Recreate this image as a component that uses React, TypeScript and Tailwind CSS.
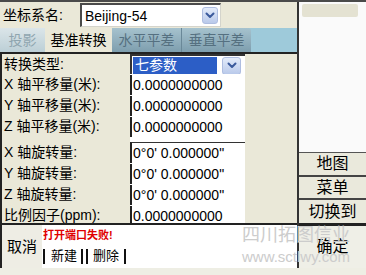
import React from "react";

// small blue drop-down button used by both combo boxes
const Chevron = ({ className }: { className: string }) => (
  <span
    className={`flex items-center justify-center rounded-[3px] border border-[#aebde0] bg-linear-to-b from-[#e4ecfa] to-[#b9c9ea] ${className}`}
  >
    <svg width="10" height="7" viewBox="0 0 10 7">
      <path
        d="M1.5 1.5 L5 5 L8.5 1.5"
        fill="none"
        stroke="#3b5a9c"
        strokeWidth="2"
        strokeLinecap="round"
        strokeLinejoin="round"
      />
    </svg>
  </span>
);

type Row = { label: string; value?: string; h: string; top?: boolean; select?: boolean; gap?: boolean };

const rows: Row[] = [
  { label: "转换类型:", h: "h-[20px]", select: true },
  { label: "X 轴平移量(米):", value: "0.0000000000", h: "h-[21px]" },
  { label: "Y 轴平移量(米):", value: "0.0000000000", h: "h-[21px]" },
  { label: "Z 轴平移量(米):", value: "0.0000000000", h: "h-[21px]" },
  { label: "", h: "h-[5px]", gap: true },
  { label: "X 轴旋转量:", value: "0°0' 0.000000\"", h: "h-[21px]", top: true },
  { label: "Y 轴旋转量:", value: "0°0' 0.000000\"", h: "h-[21px]" },
  { label: "Z 轴旋转量:", value: "0°0' 0.000000\"", h: "h-[21px]" },
  { label: "比例因子(ppm):", value: "0.0000000000", h: "h-[21px]" },
];

export default function App() {
  return (
    <div className="relative w-[366px] h-[275px] overflow-hidden bg-white text-black font-['Liberation_Sans','Noto_Sans_CJK_SC',sans-serif]">
      <div className="flex h-[268px] border-t-2 border-[#4a4a4a]">
        {/* left: main form */}
        <div className="w-[297px] flex flex-col">
          {/* coordinate system */}
          <div className="h-[26px] flex items-start pt-[1px] bg-[#eae8d8]">
            <div className="w-[80px] pl-[3px] text-[14px] leading-[24px]">坐标系名:</div>
            <div className="w-[141px] h-[24px] flex items-center bg-white border-t-2 border-l-2 border-[#4a4a4a] border-r border-b border-r-[#d4d4cc] border-b-[#d4d4cc]">
              <span className="flex-1 pl-[3px] text-[14px] leading-[20px]">Beijing-54</span>
              <Chevron className="w-[16px] h-[17px] mr-[2px]" />
            </div>
          </div>

          {/* tabs */}
          <div className="h-[24px] flex bg-[#9ecada] text-[14px] leading-[24px] text-center">
            <div className="w-[45px] bg-linear-to-b from-[#dbe5e9] to-[#bccfd6] text-[#8fa5af]">投影</div>
            <div className="w-[67px] bg-[#eae8d8]">基准转换</div>
            <div className="w-[70px] bg-linear-to-b from-[#a6c2ce] to-[#7e9eae] text-[#557080] border-r border-[#6a8898]">水平平差</div>
            <div className="w-[69px] bg-linear-to-b from-[#a6c2ce] to-[#7e9eae] text-[#557080] rounded-tr-[3px]">垂直平差</div>
          </div>

          {/* parameters */}
          <div className="h-[171px] overflow-hidden border-l-2 border-t-2 border-[#222] bg-[#eae8d8] flex flex-col">
            {rows.map((r, i) => (
              <div key={i} className={`flex shrink-0 ${r.h}`}>
                <div className="w-[128px] pl-[2px] text-[14px] leading-[21px] whitespace-nowrap">{r.label}</div>
                <div className="w-[115px] bg-white">
                  {r.select ? (
                    <div className="h-[21px] flex items-center border-t-2 border-l-2 border-[#333] pl-[1px]">
                      <span className="w-[84px] h-[17px] bg-[#2c5ec6] text-white text-[14px] leading-[17px] pl-[2px]">七参数</span>
                      <Chevron className="w-[19px] h-[18px] ml-[5px]" />
                    </div>
                  ) : r.gap ? null : (
                    <div
                      className={`h-full border-l-2 border-[#222] pl-[1px] text-[14px] leading-[21px] whitespace-nowrap ${
                        r.top ? "border-t border-t-[#333]" : "my-[1px] h-[19px] leading-[19px]"
                      }`}
                    >
                      {r.value}
                    </div>
                  )}
                </div>
                <div className="flex-1" />
              </div>
            ))}
          </div>

          {/* bottom bar */}
          <div className="flex-1 flex border-l-2 border-t-2 border-[#222]">
            <div className="w-[40px] bg-[#eeede4] flex items-center justify-center text-[15px] pt-[2px]">取消</div>
            <div className="flex-1 flex flex-col bg-white">
              <div className="h-[20px] pl-[1px] text-[11px] leading-[20px] font-bold text-[#e00000]">打开端口失败!</div>
              <div className="flex items-center h-[22px] text-[13px] pl-[1px]">
                <span className="w-[2px] h-[15px] bg-[#111]" />
                <span className="ml-[6px]">新建</span>
                <span className="ml-[4px] w-[2px] h-[15px] bg-[#111]" />
                <span className="ml-[3px] w-[2px] h-[15px] bg-[#111]" />
                <span className="ml-[5px]">删除</span>
                <span className="ml-[5px] w-[2px] h-[15px] bg-[#111]" />
              </div>
            </div>
          </div>
        </div>

        {/* right column */}
        <div className="flex-1 flex flex-col border-l-2 border-[#333] bg-[#fafafa]">
          <div className="h-[150px]">
            <div className="mt-[2px] ml-[3px] w-[56px] h-[13px] rounded-[2px] bg-[#e4e2d2]" />
          </div>
          <div className="h-[23px] border-t border-[#555] bg-[#eae9dc] text-[16px] leading-[22px] text-center">地图</div>
          <div className="h-[23px] border-t-2 border-[#444] bg-[#eae9dc] text-[16px] leading-[21px] text-center">菜单</div>
          <div className="h-[25px] border-t-2 border-[#444] bg-[#eae9dc] text-[16px] leading-[23px] text-center">切换到</div>
          <div className="flex-1 border-t-[3px] border-[#222] bg-[#efefe7] flex items-center justify-center text-[16px]">确定</div>
        </div>
      </div>
      <div className="h-[7px] bg-[#eeeee4]" />

      {/* watermark */}
      <div className="absolute left-[236px] top-[225px] w-[120px] text-center whitespace-nowrap pointer-events-none text-[#cccccc]">
        <div className="text-[18px] leading-[20px]">四川拓图信业</div>
        <div className="text-[15px] leading-[18px] mt-[3px]">www.sctlwy.com</div>
      </div>
    </div>
  );
}
